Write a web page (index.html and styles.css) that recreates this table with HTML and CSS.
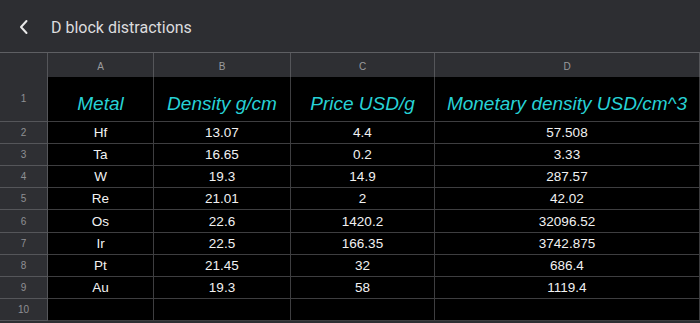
FILE: index.html
```html
<!DOCTYPE html>
<html>
<head>
<meta charset="utf-8">
<link rel="stylesheet" href="styles.css">
</head>
<body>
<header class="topbar">
  <svg class="back" width="12" height="16" viewBox="0 0 12 16"><path d="M8.5 2 L3 8 L8.5 14" fill="none" stroke="#e8e8e8" stroke-width="2" stroke-linecap="round" stroke-linejoin="round"/></svg>
  <span class="title">D block distractions</span>
</header>
<div class="sheet">
  <div class="corner"></div>
  <div class="colhead">A</div>
  <div class="colhead">B</div>
  <div class="colhead">C</div>
  <div class="colhead">D</div>

  <div class="rowhead r1">1</div>
  <div class="cell hd">Metal</div>
  <div class="cell hd">Density g/cm</div>
  <div class="cell hd">Price USD/g</div>
  <div class="cell hd">Monetary density USD/cm^3</div>

  <div class="rowhead">2</div><div class="cell">Hf</div><div class="cell">13.07</div><div class="cell">4.4</div><div class="cell">57.508</div>
  <div class="rowhead">3</div><div class="cell">Ta</div><div class="cell">16.65</div><div class="cell">0.2</div><div class="cell">3.33</div>
  <div class="rowhead">4</div><div class="cell">W</div><div class="cell">19.3</div><div class="cell">14.9</div><div class="cell">287.57</div>
  <div class="rowhead">5</div><div class="cell">Re</div><div class="cell">21.01</div><div class="cell">2</div><div class="cell">42.02</div>
  <div class="rowhead">6</div><div class="cell">Os</div><div class="cell">22.6</div><div class="cell">1420.2</div><div class="cell">32096.52</div>
  <div class="rowhead">7</div><div class="cell">Ir</div><div class="cell">22.5</div><div class="cell">166.35</div><div class="cell">3742.875</div>
  <div class="rowhead">8</div><div class="cell">Pt</div><div class="cell">21.45</div><div class="cell">32</div><div class="cell">686.4</div>
  <div class="rowhead">9</div><div class="cell">Au</div><div class="cell">19.3</div><div class="cell">58</div><div class="cell">1119.4</div>
  <div class="rowhead">10</div><div class="cell"></div><div class="cell"></div><div class="cell"></div><div class="cell"></div>
</div>
</body>
</html>
```

FILE: styles.css
```css
* { box-sizing: border-box; }
html, body { margin: 0; padding: 0; }
body {
  width: 700px;
  height: 323px;
  overflow: hidden;
  background: #2e2f33;
  font-family: "Liberation Sans", Arial, sans-serif;
}
.topbar {
  height: 53px;
  background: #2d2e32;
  border-bottom: 1px solid #5e5f63;
  display: flex;
  align-items: center;
  padding-left: 18px;
  padding-top: 2px;
}
.back { margin-right: 21px; }
.title {
  color: #dcdcde;
  font-family: Roboto, "Liberation Sans", sans-serif;
  font-size: 16px;
}
.sheet {
  display: grid;
  grid-template-columns: 48px 106px 137px 144px 265px;
  grid-template-rows: 24px 45px 22px 22px 22px 22px 23px 22px 22px 22px 22px;
}
.corner, .colhead {
  background: #2e2f33;
  border-right: 1px solid #55565a;
}
.colhead {
  color: #9a9b9e;
  font-size: 10px;
  display: flex;
  align-items: center;
  justify-content: center;
  padding-top: 2px;
}
.colhead:last-child { border-right: none; }
.rowhead {
  background: #2e2f33;
  color: #8f9094;
  font-size: 10px;
  border-bottom: 1px solid #55565a;
  border-right: 1px solid #55565a;
  display: flex;
  align-items: center;
  justify-content: center;
}
.rowhead.r1 { padding-bottom: 2px; }
.cell {
  background: #000;
  color: #f2f2f2;
  font-size: 13.5px;
  border-right: 1px solid #3e3e40;
  border-bottom: 1px solid #3e3e40;
  display: flex;
  align-items: center;
  justify-content: center;
}
.cell.hd {
  color: #27d2d6;
  font-style: italic;
  font-size: 19px;
  align-items: flex-end;
  padding-bottom: 6px;
}
```
